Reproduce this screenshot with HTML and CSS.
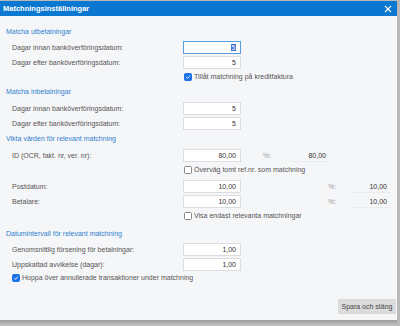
FILE: index.html
```html
<!DOCTYPE html>
<html lang="sv">
<head>
<meta charset="utf-8">
<link rel="stylesheet" href="styles.css">
</head>
<body>
<div class="dialog">
  <div class="titlebar">
    <span class="title">Matchningsinställningar</span>
    <svg class="close" width="8" height="8" viewBox="0 0 8 8"><path d="M1 1L7 7M7 1L1 7" stroke="#fff" stroke-width="1.1" fill="none"/></svg>
  </div>
  <div class="content">
    <div class="heading m11">Matcha utbetalningar</div>
    <div class="row m4"><span class="label">Dagar innan banköverföringsdatum:</span><span class="input focus"><span class="sel">5</span></span></div>
    <div class="row"><span class="label">Dagar efter banköverföringsdatum:</span><span class="input">5</span></div>
    <div class="cbrow m1"><span class="cb checked"><svg width="8" height="8" viewBox="0 0 8 8"><path d="M1.6 4.2L3.3 5.9L6.5 2.2" stroke="#fff" stroke-width="1.2" fill="none"/></svg></span><span class="cbtext">Tillåt matchning på kreditfaktura</span></div>

    <div class="heading m5">Matcha inbetalningar</div>
    <div class="row m5"><span class="label">Dagar innan banköverföringsdatum:</span><span class="input">5</span></div>
    <div class="row"><span class="label">Dagar efter banköverföringsdatum:</span><span class="input">5</span></div>

    <div class="heading m2">Vikta värden för relevant matchning</div>
    <div class="row m5"><span class="label">ID (OCR, fakt. nr, ver. nr):</span><span class="input">80,00</span><span class="pct pct-a">%:</span><span class="value">80,00</span></div>
    <div class="cbrow m1"><span class="cb"></span><span class="cbtext">Överväg tomt ref.nr. som matchning</span></div>
    <div class="row m5"><span class="label">Postdatum:</span><span class="input">10,00</span><span class="pct pct-b">%:</span><span class="value">10,00</span></div>
    <div class="row"><span class="label">Betalare:</span><span class="input">10,00</span><span class="pct pct-b">%:</span><span class="value">10,00</span></div>
    <div class="cbrow m1"><span class="cb"></span><span class="cbtext">Visa endast relevanta matchningar</span></div>

    <div class="heading m8">Datumintervall för relevant matchning</div>
    <div class="row m4"><span class="label">Genomsnittlig försening för betalningar:</span><span class="input">1,00</span></div>
    <div class="row"><span class="label">Uppskattad avvikelse (dagar):</span><span class="input">1,00</span></div>
    <div class="cbrow left"><span class="cb checked"><svg width="8" height="8" viewBox="0 0 8 8"><path d="M1.6 4.2L3.3 5.9L6.5 2.2" stroke="#fff" stroke-width="1.2" fill="none"/></svg></span><span class="cbtext">Hoppa över annullerade transaktioner under matchning</span></div>
  </div>
  <div class="footer"><button class="btn">Spara och stäng</button></div>
</div>
<div class="shade"></div>
</body>
</html>
```

FILE: styles.css
```css
* { box-sizing: border-box; }
html, body { margin: 0; padding: 0; }
body {
  width: 400px;
  height: 326px;
  background: #b9b9b9;
  font-family: "Liberation Sans", Arial, sans-serif;
  font-size: 7px;
  color: #555;
  overflow: hidden;
  display: flex;
  flex-direction: column;
}
.dialog {
  margin-top: 1px;
  width: 397px;
  height: 319px;
  background: #f5f6f8;
  display: flex;
  flex-direction: column;
}
.titlebar {
  height: 15px;
  background: #0a78d0;
  display: flex;
  align-items: center;
  justify-content: space-between;
  padding: 0 5px 0 3px;
}
.title {
  color: #fff;
  font-weight: bold;
  font-size: 7.5px;
  line-height: 15px;
}
.close { display: block; }
.content {
  flex: 1;
  display: flex;
  flex-direction: column;
  padding-left: 6px;
}
.heading {
  height: 10px;
  line-height: 10px;
  color: #2f7fcf;
  font-size: 7px;
}
.m1 { margin-top: 1px; }
.m2 { margin-top: 2px; }
.m4 { margin-top: 4px; }
.m5 { margin-top: 5px; }
.m8 { margin-top: 8px; }
.m11 { margin-top: 11px; }
.row {
  height: 15px;
  display: flex;
  align-items: flex-start;
}
.label {
  width: 177px;
  padding-left: 6px;
  height: 13px;
  line-height: 13px;
  color: #555;
}
.input {
  width: 58px;
  height: 13px;
  background: #fff;
  border: 1px solid #dcdde0;
  text-align: right;
  padding-right: 4px;
  line-height: 11px;
  color: #333;
}
.input.focus { border-color: #5b9ee0; }
.sel {
  background: #3b6fd6;
  color: #fff;
  padding: 0 0.5px;
}
.pct {
  height: 13px;
  line-height: 13px;
  color: #9a9a9a;
}
.pct-a { margin-left: 22px; width: 27px; }
.pct-b { margin-left: 87px; width: 23px; }
.value {
  width: 40px;
  height: 13px;
  line-height: 13px;
  text-align: right;
  padding-right: 4px;
  color: #333;
  border-bottom: 1px solid #ebecee;
}
.cbrow {
  height: 10px;
  display: flex;
  align-items: center;
  padding-left: 178px;
}
.cbrow.left { padding-left: 6px; }
.cb {
  width: 8px;
  height: 8px;
  border: 1px solid #8a8a8a;
  border-radius: 1.5px;
  background: #fff;
  display: flex;
  align-items: center;
  justify-content: center;
  flex: none;
}
.cb svg { display: block; }
.cb.checked {
  background: #1a73e8;
  border-color: #1a73e8;
}
.cbtext {
  margin-left: 2px;
  line-height: 10px;
  color: #555;
}
.footer {
  display: flex;
  justify-content: flex-end;
  padding: 0 1px 6px 0;
}
.btn {
  width: 58px;
  height: 15px;
  border: none;
  background: #dcdcdc;
  color: #444;
  font-family: "Liberation Sans", Arial, sans-serif;
  font-size: 7px;
  padding: 0;
}
.shade {
  flex: 1;
  background: linear-gradient(#9c9c9c, #c4c4c4);
  width: 397px;
}
```
